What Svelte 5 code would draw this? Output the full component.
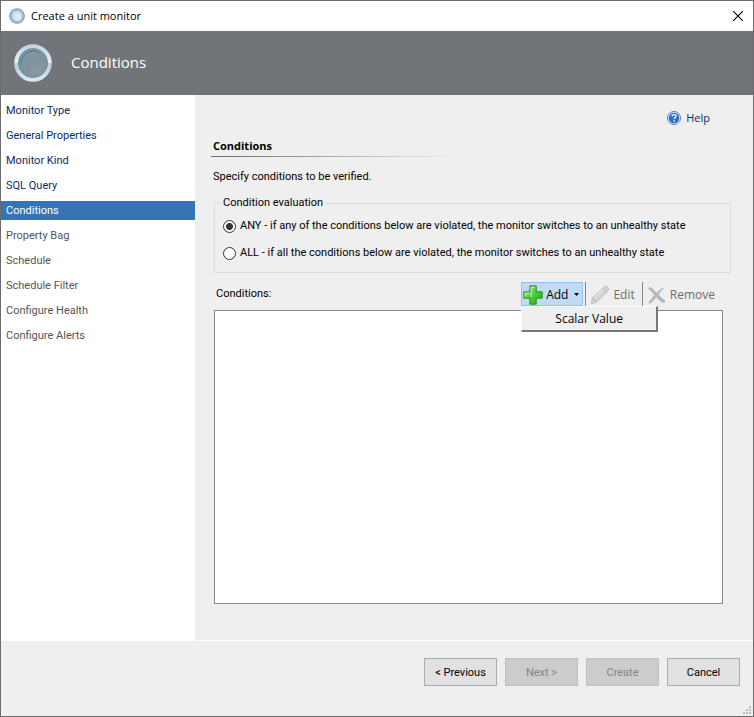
<script lang="ts">
  const steps = [
    { name: 'Monitor Type', state: 'done' },
    { name: 'General Properties', state: 'done' },
    { name: 'Monitor Kind', state: 'done' },
    { name: 'SQL Query', state: 'done' },
    { name: 'Conditions', state: 'current' },
    { name: 'Property Bag', state: 'pending' },
    { name: 'Schedule', state: 'pending' },
    { name: 'Schedule Filter', state: 'pending' },
    { name: 'Configure Health', state: 'pending' },
    { name: 'Configure Alerts', state: 'pending' }
  ];

  const modes = [
    { value: 'any', label: 'ANY - if any of the conditions below are violated, the monitor switches to an unhealthy state' },
    { value: 'all', label: 'ALL - if all the conditions below are violated, the monitor switches to an unhealthy state' }
  ];

  let evaluation = $state('any');
  let menuOpen = $state(true);
</script>

<div class="window">
  <div class="title-bar">
    <svg class="title-icon" viewBox="0 0 16 16" aria-hidden="true">
      <circle cx="8" cy="8" r="7.8" fill="#8195a5" />
      <circle cx="8" cy="8" r="6.9" fill="#b5c6d2" />
      <circle cx="8" cy="8" r="5.6" fill="#c4e0f8" stroke="#8fa9bd" stroke-width="0.8" />
      <circle cx="9" cy="9" r="3.4" fill="#d8ecfc" />
    </svg>
    <span class="title">Create a unit monitor</span>
    <button class="close" aria-label="Close">
      <svg viewBox="0 0 10 10"><path d="M0 0L10 10M10 0L0 10" stroke="#000" stroke-width="1.1" /></svg>
    </button>
  </div>

  <header class="banner">
    <svg class="banner-icon" viewBox="0 0 38 38" aria-hidden="true">
      <defs>
        <linearGradient id="ring" x1="0" y1="0" x2="0" y2="1">
          <stop offset="0" stop-color="#c2d7e2" />
          <stop offset="0.49" stop-color="#e9f1f9" />
          <stop offset="0.51" stop-color="#b7ccd9" />
          <stop offset="1" stop-color="#d3e8f1" />
        </linearGradient>
        <radialGradient id="lens" cx="0.65" cy="0.75" r="0.7">
          <stop offset="0" stop-color="#91989d" />
          <stop offset="0.5" stop-color="#7f929c" />
          <stop offset="1" stop-color="#789ba9" />
        </radialGradient>
      </defs>
      <circle cx="19" cy="19" r="16.8" fill="url(#lens)" stroke="url(#ring)" stroke-width="4" />
      <circle cx="19" cy="19" r="14.4" fill="none" stroke="#6f8a97" stroke-width="0.8" />
      <path d="M7 21A12.5 12.5 0 0 1 26 9" fill="none" stroke="#587583" stroke-width="1" />
    </svg>
    <h1>Conditions</h1>
  </header>

  <div class="body">
    <nav class="steps">
      {#each steps as step}
        <a href="#step" class={step.state}>{step.name}</a>
      {/each}
    </nav>

    <main class="page">
      <a class="help" href="#help">
        <svg viewBox="0 0 14 14" aria-hidden="true">
          <circle cx="7" cy="7" r="6.5" fill="#e6effb" stroke="#5580bd" />
          <circle cx="7" cy="7" r="5.2" fill="#2c67c9" />
          <path d="M5 5.6C5 3 9.2 3.1 9 5.3C8.9 6.6 7.1 6.7 7.1 8.2" fill="none" stroke="#fff" stroke-width="1.4" />
          <rect x="6.4" y="9.2" width="1.5" height="1.5" fill="#fff" />
        </svg>
        Help
      </a>

      <h2>Conditions</h2>
      <p class="intro">Specify conditions to be verified.</p>

      <fieldset>
        <legend>Condition evaluation</legend>
        {#each modes as mode}
          <label>
            <input type="radio" name="evaluation" value={mode.value} bind:group={evaluation} />
            {mode.label}
          </label>
        {/each}
      </fieldset>

      <div class="list-head">
        <span id="list-label">Conditions:</span>
        <div class="toolbar">
          <div class="add-wrap">
            <button class="tool add" aria-expanded={menuOpen} onclick={() => (menuOpen = !menuOpen)}>
              <svg class="tool-icon" viewBox="0 0 20 20" aria-hidden="true">
                <defs>
                  <linearGradient id="plus" x1="0" y1="0" x2="1" y2="1">
                    <stop offset="0" stop-color="#b4ee95" />
                    <stop offset="0.5" stop-color="#4fcd3c" />
                    <stop offset="1" stop-color="#20a51c" />
                  </linearGradient>
                </defs>
                <path
                  d="M7.5 .8h5q.7 0 .7.7v5.3h5.3q.7 0 .7.7v5q0 .7-.7.7h-5.3v5.3q0 .7-.7.7h-5q-.7 0-.7-.7v-5.3H1.5q-.7 0-.7-.7v-5q0-.7.7-.7h5.3V1.5q0-.7.7-.7z"
                  fill="url(#plus)"
                  stroke="#2f9e2b"
                  stroke-width="1.2"
                />
                <path d="M8.2 12V2.3h3.5M2.3 11.5V8.2H7" fill="none" stroke="#c9f5b4" stroke-width="0.9" />
              </svg>
              Add
              <svg class="arrow" viewBox="0 0 5 3" aria-hidden="true"><path d="M0 0H5L2.5 3z" /></svg>
            </button>
            {#if menuOpen}
              <div class="menu" role="menu">
                <button role="menuitem">Scalar Value</button>
              </div>
            {/if}
          </div>
          <button class="tool" disabled>
            <svg class="tool-icon" viewBox="0 0 20 20" aria-hidden="true">
              <path d="M1 19L2.5 13L14.5 1.5Q16 .5 17.8 2.2Q19.5 4 18.3 5.5L6.5 17z" fill="#d2d2d2" stroke="#c4c4c4" />
              <path d="M4 14L15.5 3" stroke="#e6e6e6" stroke-width="1.6" />
              <path d="M2.5 13Q5.5 13.5 6.5 17M13 3L17 7" fill="none" stroke="#b8b8b8" />
            </svg>
            Edit
          </button>
          <button class="tool" disabled>
            <svg class="tool-icon" viewBox="0 0 20 20" aria-hidden="true">
              <path d="M1 3.5Q2.5 1.5 4.5 2.5Q7 5 9.5 7.7Q13.5 3.5 18.5 1.5Q14 5.5 11.5 9.7Q14.5 13 18.5 15.5Q18.5 17.5 15.5 18Q12 15.5 9.3 12.3Q6.5 16 3.5 18.5Q1.5 18.5 1.5 17Q4.5 14 7.3 10Q4 6 1 3.5z" fill="#b9b9b9" />
            </svg>
            Remove
          </button>
        </div>
      </div>

      <div class="list" role="listbox" aria-labelledby="list-label" tabindex="0"></div>
    </main>
  </div>

  <footer>
    <button>&lt; Previous</button>
    <button disabled>Next &gt;</button>
    <button disabled>Create</button>
    <button>Cancel</button>
    <svg class="grip" viewBox="0 0 8 8" aria-hidden="true">
      <path d="M6 0h2v2H6zM3 3h2v2H3zM6 3h2v2H6zM0 6h2v2H0zM3 6h2v2H3zM6 6h2v2H6z" fill="#bfbfbf" />
    </svg>
  </footer>
</div>

<style>
  :global(body) {
    margin: 0;
  }

  .window {
    display: flex;
    flex-direction: column;
    box-sizing: border-box;
    min-height: 100vh;
    border: 1px solid #6b6b6d;
    background: #efefef;
    color: #000;
    font: 11px/16px Roboto, "Open Sans", sans-serif;
  }

  button {
    font: inherit;
    color: inherit;
  }

  a {
    color: #0b2a66;
    text-decoration: none;
  }

  .title-bar,
  h1,
  h2,
  .help,
  .toolbar {
    font-family: "Open Sans", sans-serif;
  }

  .title-bar {
    display: flex;
    align-items: center;
    height: 30px;
    padding: 0 10px 0 8px;
    background: #fff;
  }

  .title-icon {
    width: 16px;
    height: 16px;
    margin-right: 6px;
  }

  .close {
    display: flex;
    margin-left: auto;
    padding: 0;
    border: 0;
    background: none;
  }

  .close svg {
    width: 10px;
    height: 10px;
  }

  .banner {
    display: flex;
    align-items: center;
    gap: 19px;
    height: 64px;
    padding-left: 13px;
    background: #717579;
  }

  .banner-icon {
    width: 38px;
    height: 38px;
  }

  h1 {
    margin: 0;
    padding-bottom: 2px;
    color: #fff;
    font-size: 15px;
    font-weight: normal;
    line-height: 20px;
  }

  .body {
    display: flex;
    flex: 1;
  }

  .steps {
    display: flex;
    flex-direction: column;
    flex: 0 0 194px;
    gap: 6px;
    padding-top: 6px;
    background: #fff;
  }

  .steps a {
    padding: 1px 0 0 5px;
    line-height: 18px;
  }

  .steps .current {
    background: #3575b5;
    color: #fff;
  }

  .steps .pending {
    color: #555;
  }

  .page {
    display: flex;
    flex: 1;
    flex-direction: column;
    margin-left: 2px;
    padding: 15px 22px 36px 16px;
    border-bottom: 1px solid #fff;
  }

  .help {
    display: flex;
    align-items: center;
    align-self: flex-end;
    gap: 5px;
    margin-right: 21px;
  }

  .help svg {
    width: 14px;
    height: 14px;
  }

  h2 {
    width: 240px;
    margin: 12px 0 0 -2px;
    padding: 0 0 2px 2px;
    border-bottom: 1px solid;
    border-image: linear-gradient(to right, #68686c, #efefef) 1;
    font-size: 11px;
    line-height: 16px;
  }

  .intro {
    margin: 12px 0 0;
  }

  fieldset {
    display: flex;
    flex-direction: column;
    gap: 9px;
    margin: 10px 0 0 1px;
    padding: 6px 8px 10px;
    border: 1px solid #dcdcdc;
  }

  legend {
    margin-left: -2px;
    padding: 0 2px;
  }

  label {
    display: flex;
    align-items: center;
    gap: 4px;
    line-height: 18px;
  }

  input {
    appearance: none;
    box-sizing: border-box;
    flex: none;
    width: 13px;
    height: 13px;
    margin: 0;
    border: 1px solid #333;
    border-radius: 50%;
    background: #fff;
  }

  input:checked {
    background: radial-gradient(circle, #333 3px, #fff 4px);
  }

  .list-head {
    display: flex;
    align-items: center;
    justify-content: space-between;
    margin: 9px 9px 0 3px;
  }

  .toolbar {
    display: flex;
    font-size: 12px;
  }

  .add-wrap {
    position: relative;
    margin-right: 2px;
  }

  .tool {
    display: flex;
    align-items: center;
    gap: 3px;
    height: 24px;
    padding: 1px 7px 0 4px;
    border: 0;
    background: none;
  }

  .tool:disabled {
    border-left: 1px solid #858585;
    color: #6d6d6d;
  }

  .tool.add {
    padding: 1px 3px 0 1px;
    border: 1px solid #90c4ee;
    background: #bfdcf3;
  }

  .tool-icon {
    width: 20px;
    height: 20px;
  }

  .arrow {
    width: 5px;
    height: 3px;
    margin-left: 3px;
  }

  .menu {
    position: absolute;
    top: 100%;
    left: 0;
    z-index: 1;
    box-sizing: border-box;
    width: 137px;
    border: 1px solid #fff;
    border-right: 2px solid #777;
    border-bottom: 2px solid #777;
    background: #efefef;
  }

  .menu button {
    display: block;
    width: 100%;
    padding: 4px 0 3px;
    border: 0;
    background: none;
  }

  .list {
    flex: 1;
    min-height: 100px;
    margin: 4px 8px 0 1px;
    border: 1px solid #828790;
    background: #fff;
  }

  footer {
    position: relative;
    display: flex;
    justify-content: flex-end;
    gap: 8px;
    padding: 17px 13px 30px;
  }

  footer button {
    width: 73px;
    height: 28px;
    padding: 1px 0 0;
    border: 1px solid #adadad;
    background: #e1e1e1;
  }

  footer button:disabled {
    border-color: #bfbfbf;
    background: #ccc;
    color: #838383;
  }

  .grip {
    position: absolute;
    right: 2px;
    bottom: 2px;
    width: 8px;
    height: 8px;
  }
</style>
